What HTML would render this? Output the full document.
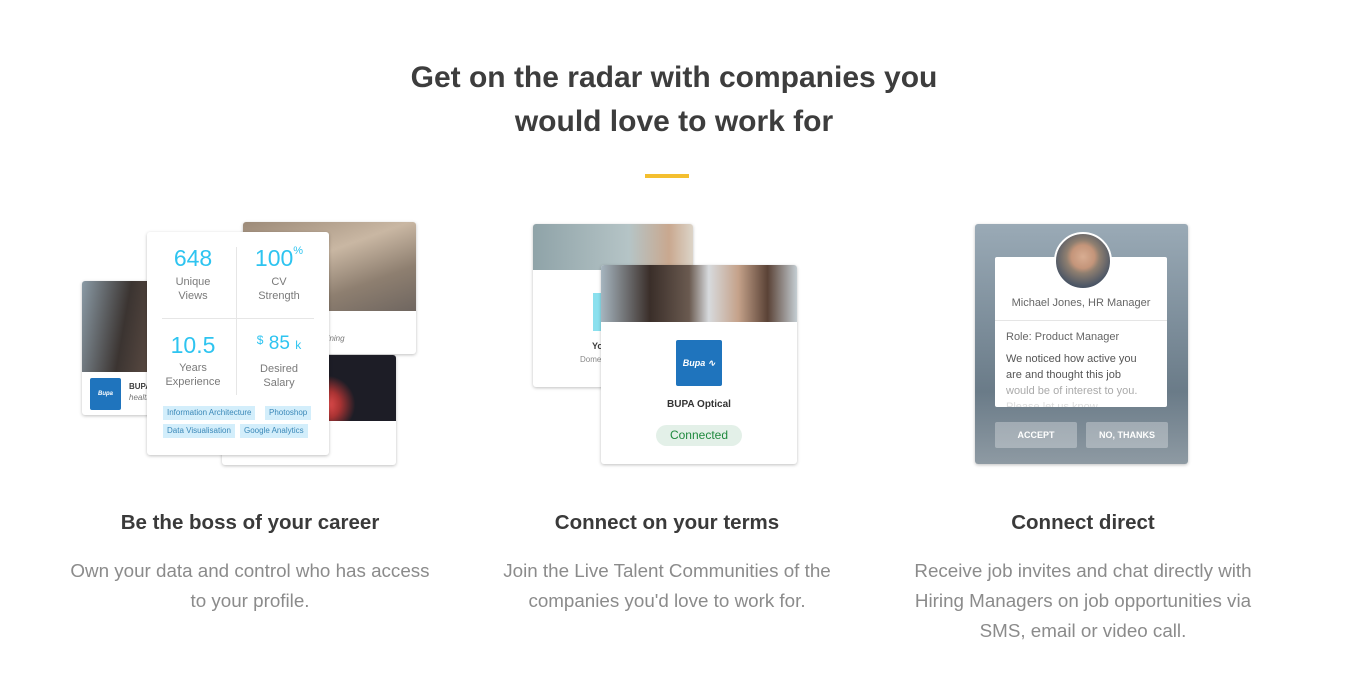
<!DOCTYPE html>
<html><head><meta charset="utf-8"><style>
*{margin:0;padding:0;box-sizing:border-box}
body{width:1348px;height:691px;background:#fff;font-family:"Liberation Sans",sans-serif;position:relative;overflow:hidden;color:#3d3d3d}
.a{position:absolute}
.t{left:0;width:1348px;text-align:center;font-weight:bold;font-size:30px;color:#3d3d3d}
.card{position:absolute;background:#fff;border-radius:3px;box-shadow:0 1px 3px rgba(0,0,0,.25);overflow:hidden}
.h{position:absolute;width:420px;text-align:center;font-weight:bold;font-size:20.5px;color:#3a3a3a}
.p{position:absolute;width:420px;text-align:center;font-size:18.8px;line-height:30px;color:#8b8b8b}
.num{position:absolute;width:88px;text-align:center;color:#2ec4f0;font-size:23px;font-weight:300;-webkit-text-stroke:0}
.lab{position:absolute;width:88px;text-align:center;color:#7a7a7a;font-size:11px;line-height:14px}
.tag{position:absolute;background:#d3eefb;color:#3a88b8;font-size:8px;height:14px;line-height:14px;padding:0 4px}
.bupa{position:absolute;background:#1f74bd;border-radius:2px;color:#fff;font-style:italic;font-weight:bold;display:flex;align-items:center;justify-content:center}
</style></head><body>
<div class="a t" style="top:61px">Get on the radar with companies you</div>
<div class="a t" style="top:105px">would love to work for</div>
<div class="a" style="left:645px;top:174px;width:44px;height:4px;background:#f4bf2f"></div>

<!-- column 1 -->
<div class="card" style="left:82px;top:281px;width:150px;height:134px">
 <div class="a" style="left:0;top:0;width:150px;height:91px;background:linear-gradient(100deg,#8a9aa5 0%,#3b3431 30%,#5a4a42 50%,#b9c6cf 80%)"></div>
 <div class="bupa" style="left:8px;top:97px;width:31px;height:32px;font-size:6px">Bupa</div>
 <div class="a" style="left:47px;top:101px;font-size:8px;font-weight:bold">BUPA</div>
 <div class="a" style="left:47px;top:112px;font-size:8px;font-style:italic;color:#777">health</div>
</div>
<div class="card" style="left:243px;top:222px;width:173px;height:132px">
 <div class="a" style="left:0;top:0;width:173px;height:89px;background:linear-gradient(160deg,#9c8a78 0%,#c9b7a3 40%,#8e7f70 70%,#6f6660 100%)"></div>
 <div class="a" style="left:78px;top:112px;font-size:8px;font-style:italic;color:#777">mining</div>
</div>
<div class="card" style="left:222px;top:355px;width:174px;height:110px">
 <div class="a" style="left:0;top:0;width:174px;height:66px;background:radial-gradient(circle at 60% 75%,#e85050 0,#a33 12%,transparent 25%),radial-gradient(circle at 40% 30%,#7fb9d8 0,transparent 30%),#1d1d26"></div>
</div>
<div class="card" style="left:147px;top:232px;width:182px;height:223px">
 <div class="a" style="left:89px;top:15px;width:1px;height:148px;background:#e6e6e6"></div>
 <div class="a" style="left:15px;top:86px;width:152px;height:1px;background:#e6e6e6"></div>
 <div class="num" style="left:2px;top:13px">648</div>
 <div class="lab" style="left:2px;top:43px">Unique<br>Views</div>
 <div class="num" style="left:88px;top:13px">100<span style="font-size:11px;vertical-align:top">%</span></div>
 <div class="lab" style="left:88px;top:43px">CV<br>Strength</div>
 <div class="num" style="left:2px;top:100px">10.5</div>
 <div class="lab" style="left:2px;top:129px">Years<br>Experience</div>
 <div class="num" style="left:88px;top:101px;font-size:19px"><span style="font-size:12px;vertical-align:top">$</span> 85 <span style="font-size:12px">k</span></div>
 <div class="lab" style="left:88px;top:130px">Desired<br>Salary</div>
 <div class="tag" style="left:16px;top:174px">Information Architecture</div>
 <div class="tag" style="left:118px;top:174px">Photoshop</div>
 <div class="tag" style="left:16px;top:192px">Data Visualisation</div>
 <div class="tag" style="left:93px;top:192px">Google Analytics</div>
</div>
<div class="h" style="left:40px;top:511px">Be the boss of your career</div>
<div class="p" style="left:40px;top:556px">Own your data and control who has access<br>to your profile.</div>

<!-- column 2 -->
<div class="card" style="left:533px;top:224px;width:160px;height:163px">
 <div class="a" style="left:0;top:0;width:160px;height:46px;background:linear-gradient(90deg,#8fa3a8,#b5c4c6 60%,#c9a88f 85%,#dcd4c8)"></div>
 <div class="a" style="left:60px;top:69px;width:12px;height:38px;background:#8be0ee"></div>
 <div class="a" style="left:59px;top:117px;font-size:9px;font-weight:bold">Yo</div>
 <div class="a" style="left:47px;top:131px;font-size:8px;color:#888">Dome</div>
</div>
<div class="card" style="left:601px;top:265px;width:196px;height:199px">
 <div class="a" style="left:0;top:0;width:196px;height:57px;background:linear-gradient(90deg,#a6b5bf 0%,#3a2e29 25%,#6a5a50 45%,#d7dadd 55%,#c5a28a 70%,#5a4236 85%,#c4cdd2 100%)"></div>
 <div class="bupa" style="left:75px;top:75px;width:46px;height:46px;font-size:9px">Bupa ∿</div>
 <div class="a" style="left:0;width:196px;top:134px;text-align:center;font-size:10px;font-weight:bold;color:#333">BUPA Optical</div>
 <div class="a" style="left:55px;top:160px;width:86px;height:21px;border-radius:11px;background:#e3f0e8;color:#1f8a3e;font-size:12px;text-align:center;line-height:21px">Connected</div>
</div>
<div class="h" style="left:457px;top:511px">Connect on your terms</div>
<div class="p" style="left:457px;top:556px">Join the Live Talent Communities of the<br>companies you'd love to work for.</div>

<!-- column 3 -->
<div class="card" style="left:975px;top:224px;width:213px;height:240px;background:linear-gradient(180deg,#9aaab6 0%,#7e8f9c 40%,#6a7b88 70%,#8e9aa3 100%)">
 <div class="a" style="left:20px;top:33px;width:172px;height:150px;background:#fff;border-radius:2px;overflow:hidden">
  <div class="a" style="left:0;width:172px;top:40px;text-align:center;font-size:11px;color:#666">Michael Jones, HR Manager</div>
  <div class="a" style="left:0;top:63px;width:172px;height:1px;background:#e5e5e5"></div>
  <div class="a" style="left:11px;top:74px;font-size:11px;color:#666">Role: Product Manager</div>
  <div class="a" style="left:11px;top:94px;width:160px;font-size:11px;line-height:16px;color:#555">We noticed how active you<br>are and thought this job<br><span style="color:#aaa">would be of interest to you.</span><br><span style="color:#ddd">Please let us know</span></div>
 </div>
 <div class="a" style="left:79px;top:8px;width:58px;height:58px;border-radius:50%;border:2px solid #fff;background:radial-gradient(circle at 50% 42%,#d8ad92 0,#c4957a 28%,#8f7f70 40%,#4f5866 70%,#233451 100%)"></div>
 <div class="a" style="left:20px;top:198px;width:82px;height:26px;background:rgba(255,255,255,.3);border-radius:2px;color:#fff;font-size:9px;font-weight:bold;text-align:center;line-height:26px">ACCEPT</div>
 <div class="a" style="left:111px;top:198px;width:82px;height:26px;background:rgba(255,255,255,.3);border-radius:2px;color:#fff;font-size:9px;font-weight:bold;text-align:center;line-height:26px">NO, THANKS</div>
</div>
<div class="h" style="left:873px;top:511px">Connect direct</div>
<div class="p" style="left:873px;top:556px">Receive job invites and chat directly with<br>Hiring Managers on job opportunities via<br>SMS, email or video call.</div>
</body></html>
